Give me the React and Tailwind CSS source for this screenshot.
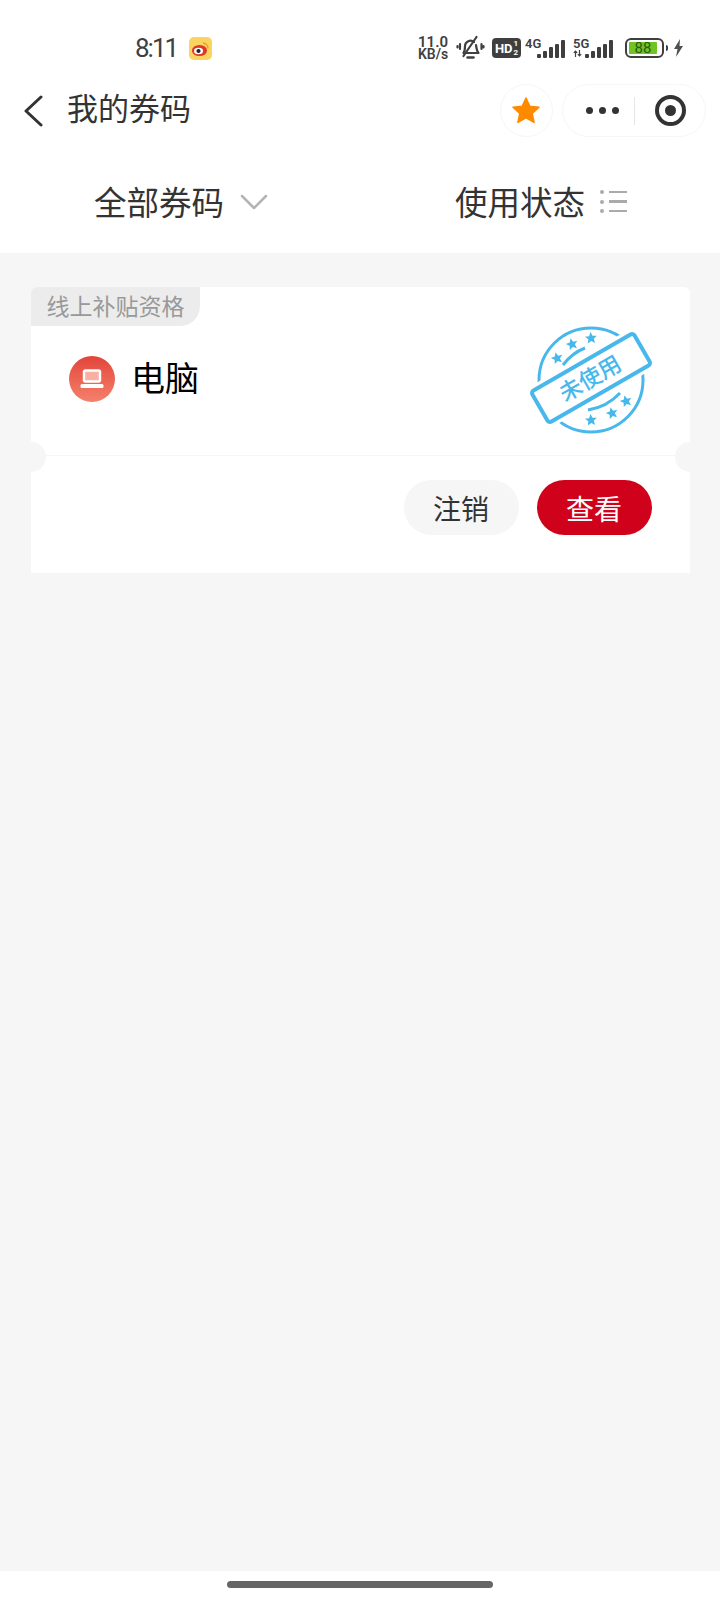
import React from "react";

const CJK = { fontFamily: '"Noto Sans CJK SC", "Noto Sans", sans-serif' };

function Signal() {
  return (
    <div className="flex items-end gap-[2px]">
      {[4, 7, 11, 14, 18].map((h, i) => (
        <div key={i} className="w-[4px] rounded-[1px] bg-[#3f3f3f]" style={{ height: h }} />
      ))}
    </div>
  );
}

function StatusBar() {
  return (
    <div className="flex h-[72px] items-center pt-[24px] pl-[135px] text-[#404040]" style={{ fontFamily: "Roboto, sans-serif" }}>
      <span className="w-[54px] text-[26px] leading-none tracking-[-2px]">8:11</span>
      {/* weibo app icon */}
      <svg width="23" height="23" viewBox="0 0 23 23">
        <rect width="23" height="23" rx="5" fill="#fbd35f" />
        <ellipse cx="10.500" cy="13.500" rx="7.500" ry="5.500" fill="#e0352b" />
        <ellipse cx="9.500" cy="14" rx="4.500" ry="3.200" fill="#fff" />
        <circle cx="9.500" cy="14" r="2.100" fill="#222" />
        <path d="M14 6a5.500 5.500 0 0 1 5 5.500" stroke="#f29a2e" strokeWidth="1.500" fill="none" />
      </svg>

      <div className="ml-[206px] w-[30px] text-center text-[14px] leading-[11px] font-semibold whitespace-nowrap">
        <div className="text-[15px]">11.0</div>
        <div className="mt-[1px]">KB/s</div>
      </div>
      {/* muted bell */}
      <svg className="ml-[8px]" width="29" height="26" viewBox="0 0 28 26" fill="none" stroke="#404040" strokeWidth="2.200" strokeLinecap="round" strokeLinejoin="round">
        <path d="M7 18c1.500-2 1.500-5 1.500-7a5.500 5.500 0 0 1 9-4" />
        <path d="M19.500 10c.5 3 .5 6 2.500 8H10" />
        <path d="M11 22.500h6" strokeWidth="2.500" />
        <path d="M7 21 20 2" />
        <path d="M3.500 9v5M1 11v1.500M25 9v5M27 11v1.500" />
      </svg>
      <div className="ml-[7px] flex h-[20px] w-[29px] items-center justify-center rounded-[4px] bg-[#3f3f3f] text-[13px] leading-none font-bold text-white">
        HD<span className="ml-[1px] flex flex-col text-[8px] leading-[9px]"><span>1</span><span>2</span></span>
      </div>
      <div className="relative ml-[4px] flex h-[19px] w-[40px] items-end justify-end">
        <span className="absolute top-[-1px] left-0 text-[13px] leading-[11px] font-semibold">4G</span>
        <Signal />
      </div>
      <div className="relative ml-[8px] flex h-[19px] w-[40px] items-end justify-end">
        <span className="absolute top-[-1px] left-0 text-[13px] leading-[11px] font-semibold">5G</span>
        {/* up/down arrows */}
        <svg className="absolute bottom-[1px] left-0" width="9" height="7" viewBox="0 0 9 7" fill="none" stroke="#404040" strokeWidth="1.200">
          <path d="M2.500 7V1M.8 2.800 2.500 1l1.700 1.800M6.500 0v6M4.800 4.200 6.500 6l1.700-1.800" />
        </svg>
        <Signal />
      </div>
      {/* battery */}
      <div className="ml-[12px] flex items-center">
        <div className="flex h-[20px] w-[39px] items-center rounded-[6px] border-2 border-[#3f3f3f] p-[2px]">
          <div className="flex h-full w-[90%] items-center justify-center rounded-[1px] bg-[#6fc424] text-[15px] leading-none text-[#2c5a10]">88</div>
        </div>
        <div className="ml-[2px] h-[6px] w-[2px] rounded-r bg-[#3f3f3f]" />
      </div>
      <svg className="ml-[5px]" width="11" height="18" viewBox="0 0 11 18">
        <path d="M7 0 1 10h3.500L3 18 10 7H6.500z" fill="#505050" />
      </svg>
    </div>
  );
}

function NavBar() {
  return (
    <div className="flex h-[74px] items-center pl-[23px] text-[#333]">
      <svg className="mt-[4px]" width="20" height="32" viewBox="0 0 20 32" fill="none" stroke="#333" strokeWidth="3" strokeLinecap="round" strokeLinejoin="round">
        <path d="M18 2 3 16l15 14" />
      </svg>
      <span className="mb-[6px] ml-[24px] text-[31px] leading-none" style={CJK}>我的券码</span>

      <div className="mt-[3px] mr-[14px] ml-auto flex items-center">
        <div className="flex h-[53px] w-[53px] items-center justify-center rounded-full border border-[#f6f6f6] pr-[2px]">
          <svg width="30" height="30" viewBox="0 0 30 30">
            <path d="M15 2l3.800 8.300 9.200 1-6.800 6.100 1.900 9-8.100-4.600-8.100 4.600 1.900-9L2 11.300l9.200-1z" fill="#ff8a00" stroke="#ff8a00" strokeWidth="1.500" strokeLinejoin="round" />
          </svg>
        </div>
        <div className="ml-[9px] flex h-[53px] w-[144px] items-center rounded-full border border-[#f6f6f6]">
          <div className="ml-[23px] flex w-[33px] justify-between">
            <span className="h-[7px] w-[7px] rounded-full bg-[#333]" />
            <span className="h-[7px] w-[7px] rounded-full bg-[#333]" />
            <span className="h-[7px] w-[7px] rounded-full bg-[#333]" />
          </div>
          <div className="ml-[15px] h-[28px] w-px bg-[#e6e6e6]" />
          <div className="ml-[20px] flex h-[31px] w-[31px] items-center justify-center rounded-full border-[4px] border-[#333]">
            <span className="h-[11px] w-[11px] rounded-full bg-[#333]" />
          </div>
        </div>
      </div>
    </div>
  );
}

function Tabs() {
  return (
    <div className="flex h-[107px] items-center pt-[4px] text-[32.500px] leading-none text-[#333]" style={CJK}>
      <span className="ml-[94px]">全部券码</span>
      <svg className="ml-[16px]" width="28" height="18" viewBox="0 0 28 18" fill="none" stroke="#b4b4b4" strokeWidth="2.500" strokeLinecap="round" strokeLinejoin="round">
        <path d="M2 3l12 12L26 3" />
      </svg>
      <span className="ml-[187px]">使用状态</span>
      <div className="ml-[15px] flex h-[23px] flex-col justify-between">
        {[0, 1, 2].map((i) => (
          <div key={i} className="flex items-center gap-[5px]">
            <span className="h-[4px] w-[4px] rounded-full bg-[#aaa]" />
            <span className="h-[2.500px] w-[18px] bg-[#aaa]" />
          </div>
        ))}
      </div>
    </div>
  );
}

function Stamp() {
  const star = "M0-6 1.700-2 6-1.700 2.700 1 3.700 5.300 0 3-3.700 5.300-2.700 1-6-1.700-1.700-2z";
  return (
    <svg className="absolute top-[32px] left-[494px]" width="138" height="122" viewBox="-4 -4 138 122" fill="none">
      <g stroke="#48b8ec" strokeWidth="3">
        <circle cx="62" cy="57" r="52" />
        <path d="M34 42Q43 30 56 25" />
        <path d="M59 87Q78 84 91 70" />
      </g>
      <g fill="#48b8ec">
        <path d={star} transform="translate(28 35) rotate(-15)" />
        <path d={star} transform="translate(43 21) rotate(-15)" />
        <path d={star} transform="translate(62 15) rotate(-5)" />
        <path d={star} transform="translate(97 78) rotate(-15)" />
        <path d={star} transform="translate(83 90) rotate(-15)" />
        <path d={star} transform="translate(62 97) rotate(-5)" />
      </g>
      <g transform="rotate(-30 62 55)">
        <rect x="-1" y="32" width="126" height="46" fill="#fff" />
        <rect x="3" y="37" width="118" height="36" rx="3" fill="#fff" stroke="#48b8ec" strokeWidth="4" />
        <text x="61" y="63" textAnchor="middle" fontSize="22.500" fontWeight="500" fill="#48b8ec" style={CJK}>未使用</text>
      </g>
    </svg>
  );
}

function Card() {
  return (
    <div className="relative h-[286px] w-[659px] overflow-hidden rounded-t-[6px] bg-white" style={CJK}>
      <div className="flex h-[39px] w-[169px] items-center justify-center rounded-br-[20px] bg-[#ececec] pb-[2px] text-[23px] leading-none text-[#999]">
        线上补贴资格
      </div>
      <div className="flex h-[130px] items-start border-b border-[#f6f6f6]">
        <div className="mt-[30px] ml-[38px] flex h-[46px] w-[46px] items-center justify-center rounded-full bg-gradient-to-b from-[#e2443a] to-[#f4806c]">
          <svg width="24" height="20" viewBox="0 0 24 20" fill="none">
            <rect x="4" y="1.500" width="16" height="11" rx="1.500" fill="#f8b0a4" stroke="#fff" strokeWidth="2.500" />
            <rect x=".5" y="15" width="23" height="4" rx="1.500" fill="#fff" />
          </svg>
        </div>
        <span className="mt-[34px] ml-[16px] text-[34px] leading-none text-black">电脑</span>
      </div>
      <Stamp />
      {/* ticket notches */}
      <div className="absolute top-[155px] left-[-15px] h-[30px] w-[30px] rounded-full bg-[#f6f6f6]" />
      <div className="absolute top-[155px] right-[-15px] h-[30px] w-[30px] rounded-full bg-[#f6f6f6]" />
      <div className="mt-[24px] mr-[38px] flex justify-end gap-[18px] text-[28px] leading-none">
        <div className="flex h-[55px] w-[115px] items-center justify-center rounded-full bg-[#f6f6f6] pr-[1px] text-[#333]">注销</div>
        <div className="flex h-[55px] w-[115px] items-center justify-center rounded-full bg-[#d0021b] pr-[1px] text-white">查看</div>
      </div>
    </div>
  );
}

export default function App() {
  return (
    <div className="flex h-[1600px] w-[720px] flex-col bg-white">
      <StatusBar />
      <NavBar />
      <Tabs />
      <div className="flex-1 bg-[#f6f6f6] pt-[34px] pl-[31px]">
        <Card />
      </div>
      <div className="flex h-[29px] justify-center pt-[10px]">
        <div className="h-[7px] w-[266px] rounded-full bg-[#666]" />
      </div>
    </div>
  );
}
